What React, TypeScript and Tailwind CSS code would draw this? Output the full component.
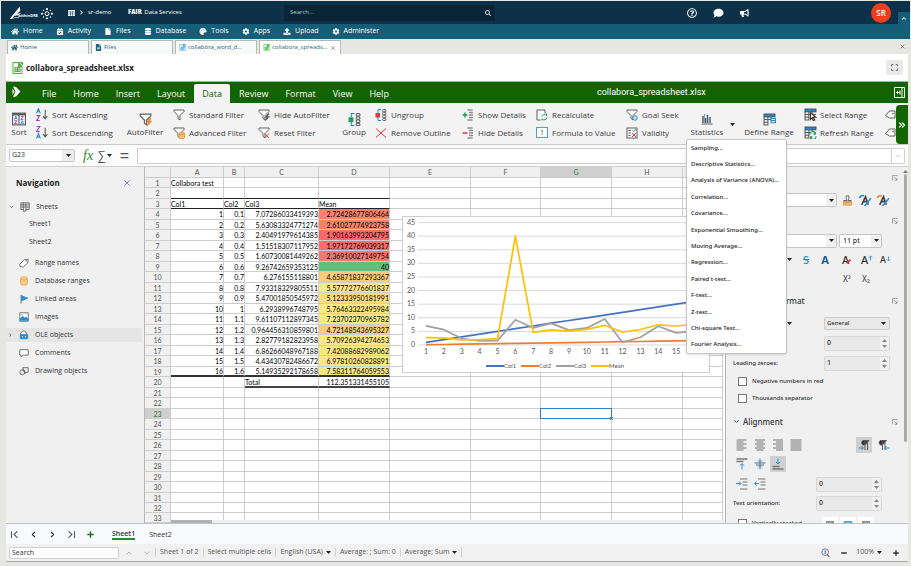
import React, { useState } from 'react';
import {
  FaHome, FaCalendarCheck, FaFile, FaDatabase, FaPalette, FaCog, FaUpload, FaSearch,
  FaRegQuestionCircle, FaComment, FaBullhorn, FaFileAlt, FaChevronUp, FaChevronRight,
} from 'react-icons/fa';
import { ChevronDown, ChevronLeft, ChevronRight, ChevronUp, X, Plus, Minus, ChevronsRight } from 'lucide-react';

const BLUE = '#2a8dd4';
const GREEN = '#18a05e';
const RED = '#e0393e';
const GREY = '#5c5c5c';

interface IconProps {
  className?: string;
  children?: React.ReactNode;
}

const Svg: React.FC<IconProps> = ({ className = 'w-3 h-3', children }) => (
  <svg viewBox="0 0 24 24" fill="none" stroke={GREY} strokeWidth="2" className={`shrink-0 ${className}`} aria-hidden="true">
    {children}
  </svg>
);

// Letter-like marks used by the sorting icons
const LetterA = ({ x, y, color }: { x: number; y: number; color: string }) => (
  <path d={`M${x} ${y + 9}l3.5-9 3.5 9M${x + 1.5} ${y + 6}h4`} stroke={color} />
);
const LetterZ = ({ x, y, color }: { x: number; y: number; color: string }) => (
  <path d={`M${x} ${y}h6l-6 9h6`} stroke={color} />
);

const SortIcon = () => (
  <Svg className="w-[14px] h-[14px]">
    <rect x="1" y="2" width="22" height="20" fill="#fff" />
    <path d="M1 4h22" strokeWidth="4" />
    <path d="M12 2v20" />
    <g strokeWidth="1.6">
      <path d="M4 13l2.5-6 2.5 6M5 11h3" stroke={BLUE} />
      <path d="M4 15h4.500l-4.500 5h4.500" stroke="#a33bc2" />
      <path d="M15 8h4.500l-4.500 5h4.500" stroke="#a33bc2" />
      <path d="M15 21l2.500-6 2.500 6M16 19h3" stroke={BLUE} />
    </g>
  </Svg>
);

const SortAscIcon = () => (
  <Svg className="w-[13px] h-[13px]">
    <LetterA x={1} y={1} color={BLUE} />
    <LetterZ x={1} y={14} color="#a33bc2" />
    <path d="M17 3v16M13 15l4 5 4-5" />
  </Svg>
);

const SortDescIcon = () => (
  <Svg className="w-[13px] h-[13px]">
    <LetterZ x={1} y={1} color="#a33bc2" />
    <LetterA x={1} y={14} color={BLUE} />
    <path d="M17 3v16M13 15l4 5 4-5" />
  </Svg>
);

const Funnel: React.FC<IconProps> = ({ className, children }) => (
  <Svg className={className}>
    <path d="M2 2h20v3l-8 8v9l-4-3v-6l-8-8z" fill="#fff" />
    {children}
  </Svg>
);

const FunnelBolt = ({ big }: { big?: boolean }) => (
  <Funnel className={big ? 'w-[13px] h-[13px]' : undefined}>
    <path d="M22 9l-6 7h5l-7 7" stroke={big ? '#ed8733' : GREY} strokeWidth="3" />
  </Funnel>
);

const FunnelDb = () => (
  <Funnel>
    <rect x="12" y="11" width="11" height="12" rx="3" fill="#f8c27c" stroke="#ed9a3c" />
    <path d="M12 15h11" stroke="#ed9a3c" />
  </Funnel>
);

const FunnelX = () => (
  <Funnel>
    <path d="M13 13l9 9M22 13l-9 9" stroke={RED} />
  </Funnel>
);

const FunnelGoal = () => (
  <Funnel>
    <circle cx="18" cy="18" r="4.500" fill="#cfe6f8" stroke={BLUE} />
  </Funnel>
);

const GroupIcon = ({ color, className }: { color: string; className?: string }) => (
  <Svg className={className}>
    <path d="M12 1h-6v7M6 16v7h6" stroke={BLUE} />
    <rect x="2" y="9" width="7" height="7" fill={color} stroke={color} />
    <rect x="15" y="1" width="7" height="4.500" rx="2" />
    <rect x="15" y="7" width="7" height="4.500" rx="2" />
    <rect x="15" y="13" width="7" height="4.500" rx="2" />
    <rect x="15" y="19" width="7" height="4" rx="2" />
  </Svg>
);

const OutlineX = () => (
  <Svg className="w-3 h-3">
    <path d="M2 3l20 18M22 3L2 21" stroke={RED} />
  </Svg>
);

const ShowDetailsIcon = ({ hide }: { hide?: boolean }) => (
  <Svg className="w-3 h-3">
    <path d="M11 2h10M11 22h10" />
    <path d="M14 7h8M14 12h8M14 17h8" stroke="#8a8a8a" strokeWidth="3" />
    {hide ? (
      <path d="M1 12h10" stroke={RED} strokeWidth="3" />
    ) : (
      <path d="M1 12h10M6 7v10" stroke={GREEN} strokeWidth="3" />
    )}
  </Svg>
);

const RecalcIcon = () => (
  <Svg className="w-3 h-3">
    <path d="M9 22h-7v-20h16v7" fill="#fff" />
    <path d="M11 15a6 6 0 0 1 10-2v-4M22 17a6 6 0 0 1-10 3v3" stroke={GREEN} />
  </Svg>
);

const ValueIcon = () => (
  <span className="flex h-[11px] w-3 shrink-0 items-center justify-center border border-[#4a9fdc] bg-white text-[7px] leading-none text-[#444]">1</span>
);

const ValidityIcon = () => (
  <Svg className="w-3 h-3">
    <rect x="2" y="2" width="20" height="20" fill="#fff" />
    <path d="M5 7h5M5 12h5M5 17h4" />
    <path d="M13 7l2 2 5-5" stroke={GREEN} />
    <path d="M12 12l8 8M20 12l-8 8" stroke={RED} />
  </Svg>
);

const StatsIcon = () => (
  <Svg className="w-3 h-3">
    <path d="M4 6v14M9 10v10M13 4v16M18 8v12" strokeWidth="3" />
    <path d="M7 2v18M16 9v11" stroke="#6da9d8" />
    <path d="M1 22h22" />
  </Svg>
);

const RangeIcon: React.FC<IconProps> = ({ children }) => (
  <Svg className="w-[13px] h-[13px]">
    <rect x="2" y="2" width="20" height="5" fill={BLUE} stroke="#33536e" />
    <path d="M2 7v15h7v-15M2 12h20M2 17h8M15 2v12" />
    {children}
  </Svg>
);

const TagIcon = () => (
  <Svg className="w-3 h-3">
    <path d="M3 13l8-9h11v14h-11z" fill="#fff" />
    <circle cx="18" cy="9" r="1" />
  </Svg>
);

const Caret = ({ className = '' }: { className?: string }) => (
  <svg viewBox="0 0 10 6" className={`h-[3px] w-[5px] shrink-0 ${className}`} aria-hidden="true">
    <path d="M0 0h10l-5 6z" fill="#222" />
  </svg>
);

// ---------- App header ----------

const mainNav = [
  { label: 'Home', icon: FaHome },
  { label: 'Activity', icon: FaCalendarCheck },
  { label: 'Files', icon: FaFile },
  { label: 'Database', icon: FaDatabase },
  { label: 'Tools', icon: FaPalette },
  { label: 'Apps', icon: FaCog },
  { label: 'Upload', icon: FaUpload },
  { label: 'Administer', icon: FaCog },
];

const Logo = () => (
  <svg viewBox="0 0 132 42" className="h-[14px] w-11 shrink-0" aria-label="aithinDRE">
    <path d="M2 38l30-36 2 13-10 8 12-2-7 7-13 1-7 9z" fill="#fff" />
    <path d="M8 38q8-5 22-3" stroke="#fff" strokeWidth="2" fill="none" />
    <text x="28" y="34" fontSize="12" fontWeight="700" fill="#fff">aithinDRE</text>
    <g stroke="#fff" strokeWidth="3" fill="#fff">
      <circle cx="114" cy="23" r="6" fill="none" />
      <circle cx="114" cy="9" r="2" /><circle cx="114" cy="37" r="2" />
      <circle cx="99" cy="23" r="2" /><circle cx="129" cy="23" r="2" />
      <circle cx="104" cy="13" r="1" /><circle cx="124" cy="13" r="1" />
      <circle cx="104" cy="33" r="1" /><circle cx="124" cy="33" r="1" />
    </g>
  </svg>
);

const AppHeader = () => (
  <header className="mx-px mt-px text-white">
    <div className="relative flex h-[23px] items-center bg-[#0c3148] text-[6px]">
      <a href="#home" className="ml-2"><Logo /></a>
      <svg viewBox="0 0 14 12" className="ml-[15px] h-[6px] w-[7px]" aria-hidden="true">
        <path d="M0 0h14v12h-14z" fill="#fff" />
        <path d="M0 4h14M0 8h14M5 2v10M9 2v10" stroke="#0c3148" />
      </svg>
      <FaChevronRight className="ml-1 h-[5px] w-[5px]" />
      <a href="#sr-demo" className="ml-1 w-10">sr-demo</a>
      <span><b className="font-extrabold">FAIR</b> <span className="ml-px">Data Services</span></span>
      <label className="absolute left-[283px] flex h-4 w-[211px] items-center bg-[#0a2537] pl-[6px] pr-1">
        <input placeholder="Search..." aria-label="Search" className="min-w-0 flex-1 bg-transparent outline-none placeholder:text-[#b9c6ce]" />
        <FaSearch className="h-[6px] w-[6px] text-[#c8d3d9]" />
      </label>
      <div className="ml-auto mr-[19px] flex items-center">
        <button aria-label="Help"><FaRegQuestionCircle className="h-[10px] w-[10px]" /></button>
        <button aria-label="Chat" className="ml-4"><FaComment className="h-[10px] w-[11px]" /></button>
        <button aria-label="Announcements" className="ml-4"><FaBullhorn className="h-2 w-[9px]" /></button>
        <button className="ml-[122px] flex h-5 w-5 items-center justify-center rounded-full bg-[#f03d1b] text-[8px] font-semibold">SR</button>
      </div>
      <button aria-label="Collapse header" className="absolute bottom-0 right-0 flex h-3 w-3 items-center justify-center bg-[#145f77]">
        <FaChevronUp className="h-[5px] w-[6px]" />
      </button>
    </div>
    <nav className="flex h-[15px] items-center bg-[#145f77] pl-[10px] text-[7px] font-medium">
      {mainNav.map(({ label, icon: Icon }) => (
        <a key={label} href={`#${label}`} className="mr-[13px] flex items-center gap-1">
          <Icon className="h-[7px] w-2" />
          {label}
        </a>
      ))}
    </nav>
  </header>
);

const FileGlyph = ({ color, className = 'w-2 h-2' }: { color: string; className?: string }) => (
  <svg viewBox="0 0 22 24" fill="none" stroke={color} strokeWidth="2" className={`shrink-0 ${className}`} aria-hidden="true">
    <path d="M20 9v14h-18v-22h11" fill="#fff" />
    <path d="M13 1l7 8h-7zM15 1h6v5" fill={color} />
    <rect x="6" y="11" width="10" height="8" />
    <path d="M6 15h10M11 11v8" />
  </svg>
);

const docTabs = [
  { label: 'Home', icon: <FaHome className="h-[7px] w-[7px]" /> },
  { label: 'Files', icon: <FaFileAlt className="h-[7px] w-[7px]" /> },
  { label: 'collabora_word_d...', icon: <FileGlyph color="#3b9fe0" className="h-[7px] w-[7px]" /> },
  { label: 'collabora_spreads...', icon: <FileGlyph color="#2fb52f" className="h-[7px] w-[7px]" />, active: true },
];

const DocTabs = () => (
  <div className="flex h-[14px] items-end gap-[2px] pl-px">
    {docTabs.map(tab => (
      <button
        key={tab.label}
        className={`flex h-full w-[82px] items-center gap-[2px] border border-b-0 border-[#b4b8b8] pl-[3px] text-[6px] text-[#1f667c] ${
          tab.active ? 'bg-white' : 'bg-[#f8f9f9]'
        }`}
      >
        {tab.icon}
        <span>{tab.label}</span>
        {tab.active && <X className="ml-auto mr-1 h-[6px] w-[6px] text-[#555]" />}
      </button>
    ))}
    <button aria-label="Close all" className="mb-1 ml-auto mr-[2px]"><X className="h-[7px] w-[7px] text-[#666]" /></button>
  </div>
);

// ---------- Ribbon ----------

const menus = ['File', 'Home', 'Insert', 'Layout', 'Data', 'Review', 'Format', 'View', 'Help'];

const MenuBar = () => {
  const [active, setActive] = useState('Data');

  return (
    <div className="relative flex h-[21px] items-end gap-px bg-[#116400] text-[9px] text-white">
      <svg viewBox="0 0 18 24" className="mb-[5px] ml-[6px] mr-3 h-3 w-[9px]" aria-hidden="true">
        <path d="M2 1l6 1 9 9-9 10-6 1 5-11z" fill="#fff" />
        <path d="M1 5l4 6-4 7z" fill="#fff" />
      </svg>
      {menus.map(menu => (
        <button
          key={menu}
          onClick={() => setActive(menu)}
          className={`h-[19px] rounded-t-[2px] px-2 ${active === menu ? 'bg-[#f3f3f3] text-[#116400]' : ''}`}
        >
          {menu}
        </button>
      ))}
      <span className="absolute left-[591px] top-1 font-[Roboto,sans-serif] text-[9px] leading-3">collabora_spreadsheet.xlsx</span>
      <button aria-label="Toggle sidebar" className="mb-[5px] ml-auto mr-[3px]">
        <svg viewBox="0 0 22 22" fill="none" stroke="#fff" strokeWidth="2" className="h-[11px] w-[11px]" aria-hidden="true">
          <path d="M1 1h20v20h-20zM16 1v20M12 11h-7M8 8l-3 3 3 3M12 7v8" />
        </svg>
      </button>
    </div>
  );
};

const Pair = ({ items, className }: { items: [React.ReactNode, string][]; className: string }) => (
  <div className={`flex shrink-0 flex-col justify-center ${className}`}>
    {items.map(([icon, label]) => (
      <button key={label} className="flex h-[18px] items-center whitespace-nowrap">
        <span className="flex w-4 shrink-0">{icon}</span>
        {label}
      </button>
    ))}
  </div>
);

const Tall = ({ icon, label, className }: { icon: React.ReactNode; label: string; className: string }) => (
  <button className={`flex shrink-0 flex-col items-center gap-px whitespace-nowrap pt-[10px] leading-3 ${className}`}>
    <span className="flex h-3 items-center">{icon}</span>
    {label}
  </button>
);

const statistics = [
  'Sampling...', 'Descriptive Statistics...', 'Analysis of Variance (ANOVA)...', 'Correlation...', 'Covariance...',
  'Exponential Smoothing...', 'Moving Average...', 'Regression...', 'Paired t-test...', 'F-test...', 'Z-test...',
  'Chi-square Test...', 'Fourier Analysis...',
];

const StatisticsMenu = () => (
  <div
    role="menu"
    className="absolute left-[-3px] top-9 z-20 grid h-[215px] w-[101px] auto-rows-fr rounded-[2px] border border-[#c4c4c4] bg-white font-['Noto_Sans',sans-serif] text-[6px] font-medium text-[#222] shadow"
  >
    {statistics.map(item => (
      <button key={item} role="menuitem" className="whitespace-nowrap pl-1 text-left">{item}</button>
    ))}
  </div>
);

const Ribbon = () => (
  <div className="relative flex h-[42px] border-b border-[#c9c9c9] bg-[#f3f3f3] text-[8px] text-[#3c3c3c]">
    <Tall className="ml-[3px] w-5" icon={<SortIcon />} label="Sort" />
    <Pair className="ml-[7px] w-[84px]" items={[[<SortAscIcon />, 'Sort Ascending'], [<SortDescIcon />, 'Sort Descending']]} />
    <Tall className="w-[38px] ml-[6px]" icon={<FunnelBolt big />} label="AutoFilter" />
    <Pair className="ml-[9px] w-[85px]" items={[[<Funnel />, 'Standard Filter'], [<FunnelDb />, 'Advanced Filter']]} />
    <Pair className="w-[84px]" items={[[<FunnelBolt />, 'Hide AutoFilter'], [<FunnelX />, 'Reset Filter']]} />
    <Tall className="w-6" icon={<GroupIcon color={GREEN} className="w-[13px] h-[13px]" />} label="Group" />
    <Pair className="ml-[9px] w-[87px]" items={[[<GroupIcon color={RED} className="w-3 h-3" />, 'Ungroup'], [<OutlineX />, 'Remove Outline']]} />
    <Pair className="w-[74px]" items={[[<ShowDetailsIcon />, 'Show Details'], [<ShowDetailsIcon hide />, 'Hide Details']]} />
    <Pair className="w-[90px]" items={[[<RecalcIcon />, 'Recalculate'], [<ValueIcon />, 'Formula to Value']]} />
    <Pair className="w-[63px]" items={[[<FunnelGoal />, 'Goal Seek'], [<ValidityIcon />, 'Validity']]} />
    <div className="relative flex w-[54px] shrink-0">
      <Tall className="w-9" icon={<StatsIcon />} label="Statistics" />
      <Caret className="ml-[5px] mt-5" />
      <StatisticsMenu />
    </div>
    <Tall
      className="w-[52px]"
      icon={<RangeIcon><path d="M15 14h8M15 10h8v8h-8z" stroke={BLUE} fill="#fff" /></RangeIcon>}
      label="Define Range"
    />
    <Pair
      className="ml-[9px] w-[80px]"
      items={[
        [<RangeIcon><path d="M12 9l10 8h-5l3 5-3 1-2-5-3 3z" fill="#fff" stroke="#333" /></RangeIcon>, 'Select Range'],
        [<RangeIcon><path d="M11 16a5 5 0 0 1 10-1M22 19a5 5 0 0 1-10 1M21 11v4h-4M12 24v-4h4" stroke={GREEN} fill="#fff" /></RangeIcon>, 'Refresh Range'],
      ]}
    />
    <div className="flex flex-col justify-center gap-[6px]"><TagIcon /><TagIcon /></div>
    <button aria-label="More commands" className="absolute right-0 top-[2px] flex h-[39px] w-3 items-center justify-center rounded-l-[4px] bg-[#116400] text-white">
      <ChevronsRight className="h-[10px] w-[10px]" strokeWidth={3} />
    </button>
  </div>
);

const FormulaBar = () => (
  <div className="flex h-[22px] items-center border-b border-[#cfcfcf] bg-[#fbfbfb] px-[3px]">
    <div className="flex h-[13px] w-[66px] items-center rounded-[2px] border border-[#c6c6c6] bg-white text-[7px] text-[#333]">
      <input aria-label="Name box" defaultValue="G23" className="min-w-0 flex-1 pl-[2px] outline-none" />
      <button aria-label="Choose range" className="flex h-full w-3 items-center justify-center bg-[#ececec]"><Caret /></button>
    </div>
    <button aria-label="Function wizard" className="ml-2 font-['Liberation_Serif',serif] text-[14px] italic leading-3 text-[#2c8a2c]">fx</button>
    <button aria-label="Select function" className="ml-[5px] flex items-center text-[12px] leading-3 text-[#555]">∑<Caret className="ml-px" /></button>
    <button aria-label="Formula" className="ml-2 font-['Liberation_Sans',sans-serif] text-[16px] leading-3 text-[#555]">=</button>
    <input aria-label="Formula input" className="ml-2 h-4 min-w-0 flex-1 rounded-l-[2px] border border-[#cfcfcf] bg-white" />
    <button aria-label="Expand formula bar" className="flex h-4 w-[13px] items-center justify-center rounded-r-[2px] border border-l-0 border-[#cfcfcf] bg-white">
      <ChevronDown className="h-[6px] w-[6px] text-[#888]" />
    </button>
  </div>
);

// ---------- Navigator ----------

const SheetsGlyph = () => (
  <Svg className="w-[10px] h-[10px]"><path d="M2 2h20v16h-8M2 2v16h6M2 7h20M2 12h20M8 2v20h6v-20" /></Svg>
);

const navItems = [
  { label: 'Range names', icon: <Svg className="w-[10px] h-[10px]"><path d="M2 15l11-11 9-1-1 9-11 10-8-2z" fill="#fff" /><circle cx="17" cy="7" r="1" /></Svg> },
  { label: 'Database ranges', icon: <Svg className="w-[10px] h-[10px]"><rect x="4" y="2" width="16" height="20" rx="5" fill="#f9cb8c" stroke="#eda244" /><path d="M4 8q8 4 16 0" stroke="#eda244" /></Svg> },
  { label: 'Linked areas', icon: <Svg className="w-[10px] h-[10px]"><path d="M5 2v21" /><path d="M6 4l15 6-15 6z" fill={BLUE} stroke={BLUE} /></Svg> },
  { label: 'Images', icon: <Svg className="w-[10px] h-[10px]"><rect x="2" y="2" width="20" height="20" fill="#fff" /><path d="M3 20v-4l6-6 5 5 3-3 5 5v3z" fill={BLUE} stroke={BLUE} /><circle cx="7" cy="7" r="1" stroke="#ed9a3c" /></Svg> },
  { label: 'OLE objects', icon: <Svg className="w-[10px] h-[10px]"><path d="M4 8q3-7 9-6l5 6v6h-14z" fill="#fff" /><path d="M3 11h18v10h-18z" fill={BLUE} stroke={BLUE} /><path d="M7 16h3M14 16h3" stroke="#fff" /></Svg>, active: true },
  { label: 'Comments', icon: <Svg className="w-[10px] h-[10px]"><path d="M2 4h20v13h-12l-5 5v-5h-3z" fill="#fff" /></Svg> },
  { label: 'Drawing objects', icon: <Svg className="w-[10px] h-[10px]"><circle cx="8" cy="15" r="6" /><path d="M9 4h13v11h-8z" /><path d="M8 9l8 10" /></Svg> },
];

const Navigator = () => (
  <aside className="w-[139px] shrink-0 border-r border-[#b5b5b5] bg-[#f0f0f0] pt-2 text-[7px] text-[#333]">
    <div className="mb-2 flex h-4 items-center justify-between pl-[10px] pr-3">
      <h2 className="text-[8px] font-bold text-[#222]">Navigation</h2>
      <button aria-label="Close navigation"><X className="h-[10px] w-[10px] text-[#7567c9]" strokeWidth={2} /></button>
    </div>
    <div className="flex h-4 items-center pl-[3px]">
      <ChevronDown className="mr-[6px] h-[6px] w-[5px]" strokeWidth={3} />
      <SheetsGlyph />
      <span className="ml-[6px]">Sheets</span>
    </div>
    <a href="#sheet1" className="flex h-[18px] items-center pl-[23px]">Sheet1</a>
    <a href="#sheet2" className="mb-[3px] flex h-[18px] items-center pl-[23px]">Sheet2</a>
    {navItems.map(item => (
      <div key={item.label} className="flex h-[18px] items-center">
        <button className={`mr-[2px] flex h-[14px] flex-1 items-center ${item.active ? 'bg-[#e5e5e5]' : ''}`}>
          <span className="ml-[2px] mr-[6px] flex w-[5px]">{item.active && <ChevronRight className="h-[6px] w-[6px]" strokeWidth={3} />}</span>
          {item.icon}
          <span className="ml-[6px]">{item.label}</span>
        </button>
      </div>
    ))}
  </aside>
);

// ---------- Sheet ----------

const columns = ['A', 'B', 'C', 'D', 'E', 'F', 'G', 'H', 'I'];

const data = [
  { c3: '7.07286033419393', mean: '2.72428677806464', fill: 'bg-[#f6836c]' },
  { c3: '5.63083324771274', mean: '2.61027774923758', fill: 'bg-[#f6806c]' },
  { c3: '2.40491979614385', mean: '1.90163993204795', fill: 'bg-[#f8696b]' },
  { c3: '1.51518307117952', mean: '1.97172769039317', fill: 'bg-[#f86c6b]' },
  { c3: '1.60730081449262', mean: '2.36910027149754', fill: 'bg-[#f6786c]' },
  { c3: '9.26742659353125', mean: '40', fill: 'bg-[#63be7b]' },
  { c3: '6.276155118801', mean: '4.65871837293367', fill: 'bg-[#fbcb79]' },
  { c3: '7.93318329805511', mean: '5.57772776601837', fill: 'bg-[#fdea83]' },
  { c3: '5.47001850545972', mean: '5.12333950181991', fill: 'bg-[#fbdc7e]' },
  { c3: '6.2938996748795', mean: '5.76463322495984', fill: 'bg-[#fbe983]' },
  { c3: '9.61107112897345', mean: '7.23702370965782', fill: 'bg-[#f9e883]' },
  { c3: '0.964456310859801', mean: '4.72148543695327', fill: 'bg-[#fbcd7a]' },
  { c3: '2.82779182823958', mean: '5.70926394274653', fill: 'bg-[#fbe983]' },
  { c3: '6.86266048967188', mean: '7.42088682989062', fill: 'bg-[#f8e883]' },
  { c3: '4.43430782486672', mean: '6.97810260828891', fill: 'bg-[#f9e883]' },
  { c3: '5.14935292178658', mean: '7.58311764059553', fill: 'bg-[#f8e883]' },
];

const cellText = (row: number, col: string): string => {
  if (row === 1) return col === 'A' ? 'Collabora test' : '';
  if (row === 3) return { A: 'Col1', B: 'Col2', C: 'Col3', D: 'Mean' }[col] || '';
  if (row === 20) return { C: 'Total', D: '112.351331455105' }[col] || '';
  const entry = data[row - 4];
  if (!entry) return '';
  const n = row - 3;
  return { A: String(n), B: String(n / 10), C: entry.c3, D: entry.mean }[col] || '';
};

const cellClass = (row: number, col: string): string => {
  const inTable = 'ABCD'.includes(col);
  const classes: string[] = [];
  if (row > 3 && !(row === 20 && col === 'C')) classes.push('text-right');
  if (col === 'D' && data[row - 4]) classes.push(data[row - 4].fill);
  if (inTable && (row === 2 || row === 3)) classes.push('border-b border-b-[#222]');
  else if (inTable && row === 19) classes.push('border-b-2 border-b-[#333]');
  else if ((col === 'C' || col === 'D') && row === 20) classes.push('border-b-2 border-b-[#444]');
  else classes.push('border-b border-b-[#cdcdcd]');
  return classes.join(' ');
};

const Chart = () => {
  const px = (i: number) => 23 + i * 17.87;
  const py = (v: number) => 128 - v * 2.72;
  const line = (values: number[]) => values.map((v, i) => `${px(i).toFixed(1)},${py(v).toFixed(1)}`).join(' ');
  const series = [
    { name: 'Col1', color: '#4472c4', values: data.map((_, i) => i + 1) },
    { name: 'Col2', color: '#ed7d31', values: data.map((_, i) => (i + 1) / 10) },
    { name: 'Col3', color: '#a0a0a0', values: data.map(d => Number(d.c3)) },
    { name: 'Mean', color: '#ffc000', values: data.map(d => Number(d.mean)) },
  ];

  return (
    <div className="absolute left-[257px] top-[49px] h-[157px] w-[308px] border border-[#cfcfcf] bg-white">
      <svg viewBox="0 0 306 155" className="block h-full w-full" fontSize="7" fill="#555">
        {[0, 5, 10, 15, 20, 25, 30, 35, 40, 45].map(v => (
          <g key={v}>
            <path d={`M15 ${py(v)}h286`} stroke="#d9d9d9" strokeWidth="1" />
            <text x="12" y={py(v) + 2} textAnchor="end">{v}</text>
          </g>
        ))}
        {data.map((_, i) => (
          <text key={i} x={px(i)} y="137" textAnchor="middle">{i + 1}</text>
        ))}
        {series.map(s => (
          <polyline key={s.name} points={line(s.values)} fill="none" stroke={s.color} strokeWidth="1.7" strokeLinejoin="round" />
        ))}
        {series.map((s, i) => (
          <g key={s.name}>
            <path d={`M${83 + i * 35} 149h18`} stroke={s.color} strokeWidth="2" />
            <text x={101 + i * 35} y="151" fontSize="6">{s.name}</text>
          </g>
        ))}
      </svg>
    </div>
  );
};

const Sheet = () => (
  <main className="relative min-w-0 flex-1 overflow-hidden bg-white pr-[2px] font-[Lato,sans-serif]">
    <table className="w-full table-fixed border-separate border-spacing-0 text-[7px] leading-[8px] text-black">
      <colgroup>
        <col className="w-[26px]" />
        <col className="w-[53px]" />
        <col className="w-[21px]" />
        <col className="w-[74px]" />
        <col className="w-[71px]" />
        <col className="w-[81px]" />
        <col className="w-[70px]" />
        <col className="w-[71px]" />
        <col className="w-[71px]" />
        <col />
      </colgroup>
      <thead>
        <tr className="h-[11px] text-[#555]">
          <th className="border-b border-r border-[#cdcdcd] bg-[#f0f0f0]" />
          {columns.map(col => (
            <th
              key={col}
              className={`border-b border-r border-[#cdcdcd] font-normal ${col === 'G' ? 'bg-[#cfcfcf] text-[#2c7a2c]' : 'bg-[#f0f0f0]'}`}
            >
              {col}
            </th>
          ))}
        </tr>
      </thead>
      <tbody>
        {Array.from({ length: 33 }, (_, i) => i + 1).map(row => (
          <tr key={row} className={row % 2 === 0 && row < 31 ? 'h-[11px]' : 'h-[10px]'}>
            <th
              scope="row"
              className={`border-b border-r border-[#cdcdcd] p-0 font-normal ${row === 23 ? 'bg-[#cfcfcf] text-[#2c7a2c]' : 'bg-[#f0f0f0] text-[#555]'}`}
            >
              {row}
            </th>
            {columns.map(col => (
              <td key={col} className={`relative whitespace-nowrap border-r border-r-[#cdcdcd] p-0 ${cellClass(row, col)}`}>
                {cellText(row, col)}
                {row === 23 && col === 'G' && (
                  <span className="absolute -bottom-px -left-px -right-px -top-px border border-[#2a82cf]">
                    <span className="absolute -bottom-[2px] -right-[2px] h-[3px] w-[3px] bg-[#2a82cf]" />
                  </span>
                )}
              </td>
            ))}
          </tr>
        ))}
      </tbody>
    </table>
    <Chart />
    <div className="absolute bottom-0 left-[26px] right-0 h-[3px] bg-[#efefef]">
      <div className="h-full w-[41px] bg-[#b0b0b0]" />
    </div>
  </main>
);

// ---------- Properties sidebar ----------

const SectionHeader = ({ title, className }: { title: string; className: string }) => (
  <div className={`flex items-center pl-[7px] pr-[5px] ${className}`}>
    <ChevronDown className="mr-[3px] h-[7px] w-[7px]" strokeWidth={3} />
    <h3 className="text-[8px] font-medium text-[#333]">{title}</h3>
    <button aria-label={`${title} options`} className="ml-auto">
      <Svg className="h-[6px] w-[6px]"><path d="M2 22v-20h20M8 8l12 12M20 11v10h-10" /></Svg>
    </button>
  </div>
);

const Spin = ({ id, value, className = '' }: { id: string; value: string; className?: string }) => (
  <div className={`flex h-[15px] w-[66px] items-center rounded-[2px] border border-[#d8d8d8] bg-[#e9e9e9] ${className}`}>
    <input id={id} aria-label={id} defaultValue={value} className="min-w-0 flex-1 pl-[2px] text-[7px] outline-none" />
    <span className="flex h-full w-[9px] flex-col items-center justify-between bg-[#f0f0f0] py-[2px]">
      <button aria-label="Increase" className="flex"><Caret className="rotate-180 opacity-50" /></button>
      <button aria-label="Decrease" className="flex"><Caret className="opacity-50" /></button>
    </span>
  </div>
);

const Combo = ({ label, options, className }: { label: string; options: string[]; className: string }) => (
  <div className={`relative ${className}`}>
    <select aria-label={label} className="block h-[14px] w-full appearance-none rounded-[2px] border border-[#c6c6c6] bg-white pl-[3px] text-[7px] leading-3">
      {options.map(o => <option key={o}>{o}</option>)}
    </select>
    <span className="pointer-events-none absolute inset-y-px right-px flex w-[10px] items-center justify-center bg-[#f0f0f0]"><Caret /></span>
  </div>
);

const Lines = ({ d }: { d: string }) => (
  <Svg className="h-3 w-3"><path d={d} stroke="#777" strokeWidth="2" /></Svg>
);

const StyleBrush = ({ color }: { color: string }) => (
  <Svg className="h-[13px] w-[13px]">
    <path d="M5 20l7-15 5 15M8 14h7" strokeWidth="3" stroke="#444" />
    <path d="M22 8l-8 10-4 4" stroke={BLUE} strokeWidth="3" />
    <path d="M1 8a5 5 0 0 1 8-4" stroke={color} strokeWidth="3" />
  </Svg>
);

const Sidebar = () => (
  <aside className="relative w-[183px] shrink-0 overflow-hidden border-l border-[#b5b5b5] bg-[#f0f0f0] pr-[5px] font-['Noto_Sans',sans-serif] text-[6px] font-medium text-[#333]">
    <SectionHeader title="Style" className="h-[22px]" />
    <div className="flex h-[22px] items-center pl-3">
      <Combo label="Cell style" options={['Default']} className="w-[99px]" />
      <Svg className="ml-[5px] h-[13px] w-[11px]"><path d="M9 2h6v5l-2 5h7v3h-16v-3h7l-2-5z" fill="#fff" /><path d="M3 16h18v6h-18z" fill="#f3b76e" stroke="#ed9a3c" /></Svg>
      <span className="ml-[6px] flex gap-[5px]"><StyleBrush color={BLUE} /><StyleBrush color="#ed8733" /></span>
    </div>
    <SectionHeader title="Character" className="h-5" />
    <div className="flex h-[19px] items-center gap-[2px] pl-3">
      <Combo label="Font name" options={['Carlito']} className="w-[99px]" />
      <Combo label="Font size" options={['11 pt']} className="w-[43px]" />
    </div>
    <div className="flex h-[19px] items-center pl-[61px] text-[11px] leading-none">
      <Caret />
      <button className="ml-2 w-3 text-[#2a8dd4] line-through">S</button>
      <button className="ml-[7px] w-3 font-bold text-[#1a5d8d]">A</button>
      <button className="ml-[11px] flex w-3">A<Svg className="-ml-[3px] mt-[5px] h-[5px] w-[5px]"><path d="M2 20l20-16" stroke={RED} strokeWidth="10" /></Svg></button>
      <button aria-label="Increase size" className="ml-[7px] flex w-3">A<Svg className="h-2 w-[5px]"><path d="M12 24v-20M4 10l8-8 8 8" stroke={BLUE} strokeWidth="4" /></Svg></button>
      <button aria-label="Decrease size" className="ml-[7px] flex w-3 text-[9px]">A<Svg className="h-2 w-[5px]"><path d="M12 0v20M4 14l8 8 8-8" stroke={BLUE} strokeWidth="4" /></Svg></button>
    </div>
    <div className="flex h-5 items-center pl-[117px] text-[8px] text-[#555]">
      <button className="w-[19px] text-left">X²</button>
      <button className="text-left">X₂</button>
    </div>
    <SectionHeader title="Number Format" className="h-6" />
    <div className="flex h-5 items-center pl-[61px]">
      <Caret />
      <div className="relative ml-[32px] w-[66px]">
        <select aria-label="Category" className="block h-[13px] w-full appearance-none rounded-[2px] border border-[#c9c9c9] bg-[#e9e9e9] pl-[2px] text-[6px]">
          <option>General</option>
        </select>
        <Caret className="pointer-events-none absolute right-[4px] top-[5px]" />
      </div>
    </div>
    <div className="flex h-5 items-center justify-between pl-[7px] pr-[13px]">
      <label htmlFor="decimals">Decimal places:</label>
      <Spin id="decimals" value="0" />
    </div>
    <div className="flex h-5 items-center justify-between pl-[7px] pr-[13px]">
      <label htmlFor="zeroes">Leading zeroes:</label>
      <Spin id="zeroes" value="1" />
    </div>
    {['Negative numbers in red', 'Thousands separator'].map(label => (
      <label key={label} className="flex h-[17px] items-center gap-[5px] pl-3">
        <input type="checkbox" className="h-[9px] w-[9px] appearance-none border border-[#777] bg-white" />
        {label}
      </label>
    ))}
    <SectionHeader title="Alignment" className="h-[29px]" />
    <div className="flex h-[17px] items-center gap-[6px] pl-[10px]">
      <Lines d="M1 2h20M1 6h14M1 10h20M1 14h14M1 18h20M1 22h14" />
      <Lines d="M2 2h20M5 6h14M2 10h20M5 14h14M2 18h20M5 22h14" />
      <Lines d="M2 2h20M8 6h14M2 10h20M8 14h14M2 18h20M8 22h14" />
      <Lines d="M1 2h22M1 6h22M1 10h22M1 14h22M1 18h22M1 22h22" />
      <button aria-label="Left to right" className="ml-12 flex h-4 w-4 items-center justify-center bg-[#cfcfcf]">
        <Svg className="h-3 w-3"><path d="M14 3v19M19 3v19M22 3h-12a5 5 0 0 0 0 9h4z" fill="#333" /><path d="M1 18h9M7 14l4 4-4 4" stroke={BLUE} /></Svg>
      </button>
      <button aria-label="Right to left">
        <Svg className="h-3 w-3"><path d="M9 3v19M14 3v19M17 3h-12a5 5 0 0 0 0 9h4z" fill="#333" /><path d="M23 18h-9M17 14l-4 4 4 4" stroke={BLUE} /></Svg>
      </button>
    </div>
    <div className="flex h-[22px] items-center gap-[2px] pl-2 [&_button]:flex [&_button]:h-4 [&_button]:w-4 [&_button]:items-center [&_button]:justify-center">
      <button aria-label="Align top"><Svg className="h-3 w-3"><path d="M1 2h22M1 7h14" strokeWidth="3" stroke="#777" /><path d="M12 23v-11M8 15l4-4 4 4" stroke={BLUE} /></Svg></button>
      <button aria-label="Align middle"><Svg className="h-3 w-3"><path d="M1 10h22M4 14h16" strokeWidth="3" stroke="#999" /><path d="M12 1v22M8 5l4 4 4-4M8 19l4-4 4 4" stroke={BLUE} /></Svg></button>
      <button aria-label="Align bottom" className="bg-[#cfcfcf]"><Svg className="h-3 w-3"><path d="M1 17h14M1 22h22" strokeWidth="3" stroke="#777" /><path d="M12 1v11M8 8l4 4 4-4" stroke={BLUE} /></Svg></button>
    </div>
    <div className="flex h-[18px] items-center gap-[6px] pl-[10px] pr-[21px]">
      <Svg className="h-3 w-3"><path d="M8 2h15M13 8h10M13 14h10M8 22h15" stroke="#777" /><path d="M0 11h9M6 7l4 4-4 4" stroke={BLUE} /></Svg>
      <Svg className="h-3 w-3"><path d="M8 2h15M13 8h10M13 14h10M8 22h15" stroke="#777" /><path d="M10 11h-9M5 7l-4 4 4 4" stroke={BLUE} /></Svg>
      <Spin id="indent" value="0" className="ml-auto" />
    </div>
    <div className="flex h-5 items-center justify-between pl-[7px] pr-[21px]">
      <label htmlFor="orientation">Text orientation:</label>
      <Spin id="orientation" value="0" />
    </div>
    <div className="flex items-start pl-3 pr-[29px] pt-1">
      <label className="flex h-3 items-center gap-[5px]">
        <input type="checkbox" className="h-[9px] w-[9px] appearance-none border border-[#777] bg-white" />
        Vertically stacked
      </label>
      <span className="ml-auto flex gap-[2px]">
        {['#777', BLUE, '#777'].map((c, i) => (
          <button key={i} aria-label={`Reference edge ${i + 1}`} className="flex h-4 w-4 justify-center bg-white pt-1">
            <Svg className="h-2 w-2"><path d="M2 3h20v19h-20z" stroke={c} strokeWidth="4" /></Svg>
          </button>
        ))}
      </span>
    </div>
    <div className="absolute bottom-[6px] right-px top-[3px] w-[3px]">
      <Caret className="-ml-px mb-px rotate-180 opacity-60" />
      <div className="h-[268px] w-[3px] rounded bg-[#a9a9a9]" />
    </div>
  </aside>
);

// ---------- Footer bars ----------

const SheetTabs = () => (
  <div className="flex h-[21px] items-center border-t border-[#c4c4c4] bg-[#f9fafd] text-[7px] text-[#333]">
    <div className="flex w-[98px] items-center gap-[10px] pl-1 [&_svg]:h-[9px] [&_svg]:w-[9px]">
      <button aria-label="First sheet"><Svg><path d="M4 3v18M20 3l-9 9 9 9" strokeWidth="3" /></Svg></button>
      <button aria-label="Previous sheet"><ChevronLeft strokeWidth={3} /></button>
      <button aria-label="Next sheet"><ChevronRight strokeWidth={3} /></button>
      <button aria-label="Last sheet"><Svg><path d="M20 3v18M4 3l9 9-9 9" strokeWidth="3" /></Svg></button>
      <button aria-label="Insert sheet"><Plus className="text-[#1c7a1c]" strokeWidth={4} /></button>
    </div>
    <button className="ml-2 border-b-2 border-[#2c8a2c] font-semibold leading-[9px]">Sheet1</button>
    <button className="ml-[14px] leading-[9px]">Sheet2</button>
  </div>
);

const Divider = () => <span className="mx-1 h-[9px] w-px bg-[#d2d2d2]" />;

const StatusBar = () => (
  <footer className="flex h-[17px] items-center bg-[#f1f1f1] pl-[3px] pr-2 text-[7px] text-[#555]">
    <input placeholder="Search" aria-label="Search sheet" className="h-3 w-[110px] rounded-[2px] border border-[#d0d0d0] bg-white pl-[2px] placeholder:text-[#333]" />
    <button aria-label="Previous match" className="ml-[6px]"><ChevronUp className="h-2 w-2 text-[#999]" /></button>
    <button aria-label="Next match" className="ml-[10px]"><ChevronDown className="h-2 w-2 text-[#999]" /></button>
    <Divider />
    <span>Sheet 1 of 2</span>
    <Divider />
    <span>Select multiple cells</span>
    <Divider />
    <button className="flex items-center gap-[3px]">English (USA)<Caret /></button>
    <Divider />
    <span>Average: ; Sum: 0</span>
    <Divider />
    <button className="flex items-center gap-[3px]">Average; Sum<Caret /></button>
    <Divider />
    <span className="ml-auto flex items-center">
      <button aria-label="Reset zoom">
        <Svg className="h-[9px] w-[9px]"><circle cx="11" cy="11" r="9" /><path d="M11 6v10" stroke={BLUE} strokeWidth="3" /><path d="M17 18l5 5" strokeWidth="3" /></Svg>
      </button>
      <button aria-label="Zoom out" className="ml-[10px]"><Minus className="h-2 w-2 text-[#333]" strokeWidth={4} /></button>
      <button className="ml-2 flex items-center gap-[3px]">100%<Caret /></button>
      <button aria-label="Zoom in" className="ml-[10px]"><Plus className="h-2 w-2 text-[#333]" strokeWidth={4} /></button>
    </span>
  </footer>
);

export default function App() {
  return (
    <div className="flex h-screen min-h-[400px] flex-col overflow-hidden bg-[#e6e7e3] font-['Open_Sans','Noto_Sans',sans-serif]">
      <AppHeader />
      <div className="ml-[6px] mr-[3px] mt-px flex min-h-0 flex-1 flex-col pb-1">
        <DocTabs />
        <div className="flex min-h-0 flex-1 flex-col border-b border-[#a5a5a5] bg-white">
          <div className="flex h-[28px] shrink-0 items-center border-b border-[#b0b0b0] pl-[6px] pr-[5px]">
            <FileGlyph color="#3fb52f" className="h-3 w-[11px]" />
            <h1 className="ml-[3px] text-[8px] font-bold text-[#222]">collabora_spreadsheet.xlsx</h1>
            <button aria-label="Full screen" className="ml-auto flex h-[15px] w-[17px] items-center justify-center rounded-[2px] bg-[#e9e9e9]">
              <Svg className="h-[7px] w-[7px]"><path d="M2 8v-6h6M16 2h6v6M22 16v6h-6M8 22h-6v-6" strokeWidth="3" /></Svg>
            </button>
          </div>
          <MenuBar />
          <Ribbon />
          <FormulaBar />
          <div className="flex min-h-0 flex-1 overflow-hidden">
            <Navigator />
            <Sheet />
            <Sidebar />
          </div>
          <SheetTabs />
          <StatusBar />
        </div>
      </div>
    </div>
  );
}
